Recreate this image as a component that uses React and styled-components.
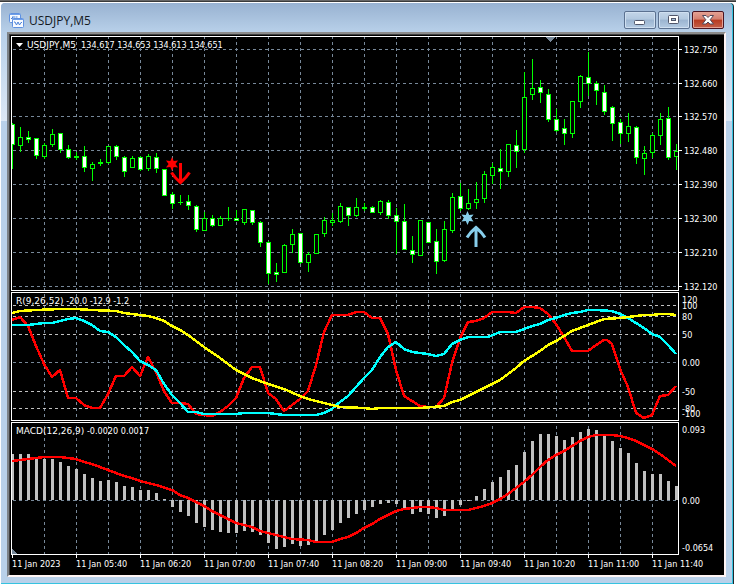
import React from "react";
import styled, { createGlobalStyle } from "styled-components";

const GlobalStyle = createGlobalStyle`
  * { box-sizing: border-box; }
  html, body { margin: 0; background: #ffffff; }
`;

const Frame = styled.div`
  display: flex;
  flex-direction: column;
  min-height: 100vh;
  padding: 0 3px 0 0;
  background: #ffffff;
`;

const TopEdge = styled.div`
  height: 3px;
  margin-right: -3px;
  background: linear-gradient(#666666 0 1px, #3a3a3a 1px 2px, #ffffff 2px 3px);
`;

const ChartWindow = styled.main`
  flex: 1;
  display: flex;
  flex-direction: column;
  margin-left: 1px;
  padding: 0 6px 6px;
  border-right: 1px solid #35c3e0;
  border-bottom: 1px solid #35c3e0;
  border-radius: 4px 4px 0 0;
  box-shadow: 1px 0 0 #20262c;
  background:
    linear-gradient(#98b2d1 0, #b9d1ea 30px, transparent 30px) 0 0 / 100% 30px no-repeat,
    linear-gradient(#b9d1ea 0, #dce8f6 88px) 0 30px / 100% 88px no-repeat,
    #b9d1ea;
`;

const TitleBar = styled.header`
  display: flex;
  align-items: center;
  gap: 5px;
  height: 29px;
  flex: none;
  padding: 6px 2px 0 2px;
`;

const Title = styled.h1`
  flex: 1;
  margin: 0;
  color: #14191f;
  font: 400 12px/16px "Open Sans", "Noto Sans", sans-serif;
`;

const Buttons = styled.div`
  display: flex;
  gap: 2px;
  height: 18px;
  align-self: flex-start;
  margin-top: 2px;
`;

const WindowButton = styled.button`
  display: flex;
  align-items: center;
  justify-content: center;
  width: 32px;
  height: 18px;
  padding: 0;
  border: 1px solid ${(p) => (p.$danger ? "#4a1420" : "#5b7190")};
  border-radius: 2px;
  box-shadow: inset 0 0 0 1px ${(p) => (p.$danger ? "#e3a093" : "#cfdff0")};
  background: ${(p) =>
    p.$danger
      ? "linear-gradient(#e4a194 0, #d47f6e 45%, #b83a20 50%, #c4604a 100%)"
      : "linear-gradient(#c3d5e8 0, #b2c8df 45%, #9bb4d0 50%, #b4cbe3 100%)"};
`;

const Client = styled.section`
  flex: 1;
  display: flex;
  flex-direction: column;
  gap: 1px;
  padding: 2px 0 0 2px;
  border: 2px solid;
  border-color: #8c8c8c #fff5f5 #fff5f5 #7c8288;
  box-shadow: inset 1px 1px 0 #404040;
  background: #000000;
  color: #ffffff;
  font: 400 9px/12px "DejaVu Sans Condensed", "DejaVu Sans", sans-serif;
`;

const Panel = styled.div`
  flex: ${(p) => p.$share} 1 0;
  display: grid;
  grid-template-columns: minmax(0, 1fr) 45px;
  min-height: 0;
`;

const Plot = styled.figure`
  position: relative;
  display: flex;
  min-height: 0;
  margin: 0;
  border: 1px solid #ffffff;
`;

const Drawing = styled.svg`
  flex: 1;
  width: 100%;
  height: 100%;
  min-width: 0;
  min-height: 0;
`;

const Caption = styled.figcaption`
  position: absolute;
  top: 2px;
  left: 4px;
  display: flex;
  align-items: center;
  white-space: pre;
  svg { margin-right: 4px; }
`;

const Name = styled.span`
  font-family: "DejaVu Sans", sans-serif;
`;

const Scale = styled.div`
  display: flex;
  flex-direction: column;
  min-height: 0;
`;

const Mark = styled.div`
  flex: ${(p) => p.$gap} 1 0;
  display: flex;
  align-items: flex-end;
  gap: ${(p) => p.$space}px;
  min-height: 0;
  line-height: 0;
  &::before {
    content: "";
    width: ${(p) => (p.$tick ? 3 : 0)}px;
    height: 1px;
    background: #ffffff;
  }
  span { height: 0; white-space: nowrap; }
`;

const TimeAxis = styled.div`
  display: flex;
  height: 20px;
  margin-top: -1px;
  padding: 0 46px 0 1px;
  flex: none;
`;

const TimeMark = styled.div`
  flex: ${(p) => p.$span} 1 0;
  min-width: 0;
  white-space: nowrap;
  &::before {
    content: "";
    display: block;
    width: 1px;
    height: 3px;
    background: #ffffff;
  }
`;

// wick top, body top, body bottom, wick bottom, falling
const candles = [
  [123,124,144,168,1],[127,137,145,151,0],[131,137,139,142,1],[138,138,155,158,1],[143,145,156,158,0],[129,134,144,146,0],
  [133,133,149,152,1],[145,149,157,158,1],[152,156,157,159,1],[146,156,167,171,1],[162,164,168,180,0],[159,162,163,165,1],
  [146,146,162,163,0],[145,146,156,159,1],[156,157,171,176,1],[156,158,167,167,0],[156,157,169,170,1],[154,156,168,170,0],
  [153,157,168,172,1],[169,169,195,195,1],[192,194,203,208,1],[195,202,202,204,1],[195,201,205,209,1],[205,206,229,231,1],
  [212,218,230,230,0],[215,218,225,226,1],[216,218,225,225,0],[207,218,218,220,1],[210,218,220,220,1],[209,209,222,224,0],
  [210,210,222,224,1],[221,222,242,246,1],[241,242,273,283,1],[263,272,274,281,1],[244,245,272,272,0],[229,234,244,252,0],
  [233,233,262,263,1],[252,254,262,271,0],[234,234,253,253,0],[217,220,233,236,0],[213,220,222,225,0],[203,206,221,222,0],
  [207,207,215,225,1],[198,207,215,216,0],[203,207,208,210,1],[206,207,212,212,1],[200,201,212,214,0],[200,202,215,218,1],
  [208,215,221,253,1],[204,221,249,249,1],[236,250,254,262,1],[220,220,255,255,0],[222,222,242,242,1],[229,241,261,273,1],
  [221,229,260,261,0],[193,197,230,232,0],[183,196,208,210,1],[189,203,208,209,0],[182,199,202,208,0],[171,174,198,202,0],
  [163,167,175,183,0],[149,168,171,188,1],[144,144,171,176,0],[130,145,151,167,1],[72,97,149,152,0],[59,88,94,99,0],
  [80,87,92,102,1],[89,94,119,121,1],[109,119,130,131,1],[119,128,133,144,1],[101,101,133,137,0],[75,76,101,107,0],
  [52,77,83,95,1],[81,83,90,104,1],[85,92,111,114,1],[106,107,123,140,1],[119,122,133,143,1],[113,126,133,141,0],
  [126,127,157,163,1],[146,153,158,174,0],[133,135,152,157,0],[113,119,135,144,0],[107,118,157,159,1],[144,151,156,169,0],
];

const histogram = [
  454,454,454,459,459,459,462,466,469,474,478,481,480,482,486,487,490,490,493,499,507,512,516,523,527,530,532,533,533,531,
  532,535,543,549,547,544,546,545,541,535,530,523,518,514,510,507,504,503,504,510,514,512,514,518,516,510,505,501,496,489,
  482,477,470,465,452,441,434,434,436,440,437,432,429,430,435,441,448,453,463,471,474,474,481,486,
];

const shortRci = "12,320 20,317 28,326 36,346 44,364 52,377 60,370 68,398 76,398 84,405 92,408 100,408 108,394 116,376 124,376 132,367 140,376 148,357 156,372 164,391 172,403 180,403 188,404 196,414 204,415 212,416 220,412 228,406 236,398 244,378 252,367 260,367 268,393 276,399 284,411 292,405 300,399 308,391 316,365 324,332 332,315 340,315 348,315 356,312 364,312 372,318 380,318 388,334 396,370 404,396 412,401 420,406 428,407 436,407 444,398 452,363 460,338 468,322 476,321 484,318 492,312 508,312 516,313 524,307 532,307 540,308 548,314 556,324 564,337 572,351 588,351 596,345 604,340 607,340 612,344 620,369 628,387 636,413 644,418 652,415 660,396 668,395 676,386";
const midRci = "12,325 28,325 44,323 52,323 60,321 68,319 76,318 84,321 92,325 100,331 108,332 116,337 124,345 132,352 140,361 148,365 156,370 164,384 172,395 180,403 188,412 196,412 204,414 236,414 244,413 268,413 284,415 316,415 324,413 332,409 340,402 348,396 356,387 364,378 372,370 380,357 388,347 396,342 404,349 412,352 428,354 436,356 444,354 452,344 460,340 468,337 488,337 500,332 516,332 524,329 532,326 540,324 548,320 556,318 564,315 572,313 580,312 588,310 596,310 612,311 620,314 628,318 636,323 644,328 652,334 660,337 668,345 676,354";
const longRci = "12,313 20,311 36,310 60,309 76,309 92,310 116,311 124,313 140,315 148,316 156,318 164,321 172,326 180,330 188,335 196,341 204,347 220,358 236,370 252,378 268,384 284,389 300,396 308,399 324,403 340,407 364,408 372,409 380,408 420,408 444,406 452,402 460,400 468,396 476,392 484,388 500,380 508,374 516,368 524,361 532,356 540,351 548,345 556,341 564,336 572,331 580,328 588,325 596,322 604,319 620,318 628,317 644,315 652,315 660,314 668,314 676,315";
const signal = "12,461 20,460 28,459 36,458 44,457 60,457 68,458 76,459 84,462 92,464 100,467 108,470 116,473 124,476 132,478 140,481 156,485 172,490 180,495 188,498 196,502 204,506 212,511 220,515 228,519 236,523 244,525 252,527 260,531 268,533 276,535 284,537 292,539 308,540 316,542 332,542 340,539 348,537 356,533 364,528 372,524 380,519 388,515 396,511 404,509 420,507 428,507 436,508 444,510 468,510 476,508 484,506 492,503 500,499 508,494 516,488 524,482 532,475 540,467 548,460 556,455 564,451 572,446 580,441 588,437 596,435 612,435 620,436 628,438 636,441 644,445 652,449 660,454 668,460 676,466";

const columns = Array.from({ length: 20 }, (_, i) => 44 + 32 * i);

function Grid({ top, bottom, rows }) {
  const start = Math.ceil(top / 6) * 6 - 6;
  return (
    <g strokeDasharray="3 3" fill="none">
      {columns.map((x) => (
        <path key={x} stroke="#778899" d={`M${x + 0.5} ${start}V${bottom}`} />
      ))}
      {rows.map(([y, color]) => (
        <path key={y} stroke={color} d={`M13 ${y + 0.5}H678`} />
      ))}
    </g>
  );
}

function Curve({ points, color }) {
  return <polyline points={points} fill="none" stroke={color} strokeWidth="2.5" strokeLinejoin="round" />;
}

function Candle({ index, data }) {
  const [high, top, bottom, low, falling] = data;
  const x = 12 + index * 8;
  return (
    <g>
      <rect x={x} y={high} width="1" height={low - high + 1} fill="#00ff00" />
      <rect x={x - 2} y={top} width="5" height={bottom - top + 1} fill="#00ff00" />
      {bottom - top > 1 && (
        <rect x={x - 1} y={top + 1} width="3" height={bottom - top - 1} fill={falling ? "#ffffff" : "#000000"} />
      )}
    </g>
  );
}

function Star({ x, y, color }) {
  const points = Array.from({ length: 12 }, (_, i) => {
    const r = i % 2 ? 3.4 : 7;
    const a = (i * Math.PI) / 6;
    return `${x + r * Math.sin(a)},${y - r * Math.cos(a)}`;
  }).join(" ");
  return <polygon points={points} fill={color} />;
}

function Axis({ marks, space = 0 }) {
  return (
    <Scale>
      {marks.map(([gap, text, tick]) => (
        <Mark key={text + gap} $gap={gap} $tick={tick} $space={space}>
          <span>{text}</span>
        </Mark>
      ))}
    </Scale>
  );
}

const priceMarks = [
  [14, "132.750", 1],[34, "132.660", 1],[33, "132.570", 1],[34, "132.480", 1],
  [34, "132.390", 1],[34, "132.300", 1],[34, "132.210", 1],[34, "132.120", 1],[4, "", 0],
];
const rciMarks = [
  [8, "120", 0],[6, "100", 0],[11, "80", 0],[18, "50", 0],[28, "0.00", 0],
  [29, "-50", 0],[17, "-80", 0],[5, "-100", 0],[7, "", 0],
];
const macdMarks = [[8, "0.093", 0],[71, "0.00", 0],[47, "-0.0654", 0],[7, "", 0]];
const times = [
  "11 Jan 2023","11 Jan 05:40","11 Jan 06:20","11 Jan 07:00","11 Jan 07:40","11 Jan 08:20",
  "11 Jan 09:00","11 Jan 09:40","11 Jan 10:20","11 Jan 11:00","11 Jan 11:40",
];

function ChartIcon() {
  return (
    <svg width="15" height="15" viewBox="0 0 15 15" aria-hidden="true">
      <rect x=".5" y=".5" width="11" height="9" rx="1" fill="#f8fbff" stroke="#5f91e0" />
      <path d="M1 1.5h10" stroke="#6e9fe9" strokeWidth="1" />
      <path d="M2 5.500h1.500V3.500M5 3v3M6.500 4h2" stroke="#4b82d8" fill="none" />
      <rect x="3.5" y="5.5" width="11" height="9" rx="1" fill="#f8fbff" stroke="#5f91e0" />
      <path d="M4 6.5h10" stroke="#6e9fe9" strokeWidth="1" />
      <path d="M5 9h1l1.500 3L9 9l1.500 3L12 9.500h1" stroke="#4b82d8" fill="none" />
    </svg>
  );
}

export default function App() {
  return (
    <Frame>
      <GlobalStyle />
      <TopEdge />
      <ChartWindow>
        <TitleBar>
          <ChartIcon />
          <Title>USDJPY,M5</Title>
          <Buttons>
            <WindowButton type="button" aria-label="Minimize">
              <svg width="12" height="12" viewBox="0 0 12 12">
                <rect x=".5" y="6.5" width="10" height="4" rx="1" fill="#ffffff" stroke="#50566a" />
              </svg>
            </WindowButton>
            <WindowButton type="button" aria-label="Maximize">
              <svg width="12" height="12" viewBox="0 0 12 12">
                <rect x=".5" y="1.5" width="10" height="8" rx="1" fill="#ffffff" stroke="#50566a" />
                <rect x="3.5" y="4.5" width="4" height="2" fill="#a4bdd8" stroke="#50566a" />
              </svg>
            </WindowButton>
            <WindowButton type="button" aria-label="Close" $danger>
              <svg width="12" height="12" viewBox="0 0 12 12">
                <path d="M.5 1.5h3.5l2 2 2-2h3.5L8.2 5.7l3.3 4.3H8L6 8l-2 2H.5l3.3-4.3z" fill="#ffffff" stroke="#50475a" />
              </svg>
            </WindowButton>
          </Buttons>
        </TitleBar>

        <Client>
          <Panel $share={255}>
            <Plot>
              <Drawing viewBox="12 37 666 253" preserveAspectRatio="none" shapeRendering="crispEdges" role="img" aria-label="USDJPY candlesticks">
                <Grid top={37} bottom={290} rows={[49, 83, 116, 150, 184, 218, 252, 286].map((y) => [y, "#778899"])} />
                <path d="M545 37h11l-5.500 5z" fill="#778899" />
                {candles.map((c, i) => (
                  <Candle key={i} index={i} data={c} />
                ))}
                <g shapeRendering="auto">
                  <Star x={172} y={164} color="#ff0000" />
                  <path d="M180.5 163v19M171.500 172.500q3 5 9 10q6-5 9-10" fill="none" stroke="#ff0000" strokeWidth="3" />
                  <Star x={467.5} y={218} color="#87ceeb" />
                  <path d="M476 247v-19M467 237.500q3-5 9-10q6 5 9 10" fill="none" stroke="#87ceeb" strokeWidth="3" />
                </g>
              </Drawing>
              <Caption>
                <svg width="7" height="4" viewBox="0 0 7 4" aria-hidden="true">
                  <path d="M0 0h7L3.500 4z" fill="#ffffff" />
                </svg>
                <Name>USDJPY,M5</Name>
                {"  134.617 134.653 134.613 134.651"}
              </Caption>
            </Plot>
            <Axis marks={priceMarks} space={2} />
          </Panel>

          <Panel $share={129}>
            <Plot>
              <Drawing viewBox="12 293 666 127" preserveAspectRatio="none" shapeRendering="crispEdges" role="img" aria-label="RCI">
                <Grid
                  top={293}
                  bottom={420}
                  rows={[[305, "#c0c0c0"], [316, "#c0c0c0"], [334, "#c0c0c0"], [362, "#778899"], [391, "#c0c0c0"], [408, "#c0c0c0"]]}
                />
                <Curve points={shortRci} color="#ff0000" />
                <Curve points={midRci} color="#00ffff" />
                <Curve points={longRci} color="#ffff00" />
              </Drawing>
              <Caption>
                <Name>R(9,26,52)</Name>
                {" -20.0 -12.9 -1.2"}
              </Caption>
            </Plot>
            <Axis marks={rciMarks} space={3} />
          </Panel>

          <Panel $share={133}>
            <Plot>
              <Drawing viewBox="12 423 666 131" preserveAspectRatio="none" shapeRendering="crispEdges" role="img" aria-label="MACD">
                <Grid top={423} bottom={554} rows={[[500, "#778899"]]} />
                <path d="M12 549l5 5h-5z" fill="#778899" />
                {histogram.map((y, i) => (
                  <rect key={i} x={11 + i * 8} y={Math.min(y, 500)} width="3" height={Math.abs(y - 500)} fill="#c0c0c0" />
                ))}
                <Curve points={signal} color="#ff0000" />
              </Drawing>
              <Caption>
                <Name>MACD(12,26,9)</Name>
                {" -0.0020 0.0017"}
              </Caption>
            </Plot>
            <Axis marks={macdMarks} space={3} />
          </Panel>

          <TimeAxis>
            {times.map((t, i) => (
              <TimeMark key={t} $span={i === times.length - 1 ? 26 : 64}>
                {t}
              </TimeMark>
            ))}
          </TimeAxis>
        </Client>
      </ChartWindow>
    </Frame>
  );
}
